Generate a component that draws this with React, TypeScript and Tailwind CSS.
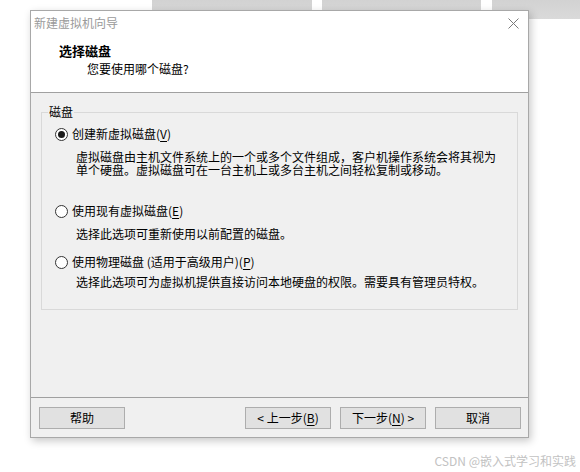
import React from "react";

const font = { fontFamily: '"Noto Sans CJK SC", "Noto Sans", sans-serif' };

function Radio({ checked }: { checked?: boolean }) {
  return (
    <span className="w-[13px] h-[13px] rounded-full border border-[#333333] bg-white flex items-center justify-center shrink-0">
      {checked && <span className="w-[7px] h-[7px] rounded-full bg-[#1a1a1a]" />}
    </span>
  );
}

function Mnemonic({ k }: { k: string }) {
  return (
    <>
      (<span className="underline underline-offset-2">{k}</span>)
    </>
  );
}

function Button({ children }: { children: React.ReactNode }) {
  return (
    <button className="w-[86px] h-[22px] bg-[#e1e1e1] border border-[#adadad] text-[12px] leading-[20px] text-black flex items-center justify-center">
      {children}
    </button>
  );
}

export default function App() {
  return (
    <div className="relative w-[580px] h-[472px] bg-white overflow-hidden text-black" style={font}>
      {/* windows behind */}
      <div className="flex">
        <div className="ml-[152px] w-[160px] h-[19px] bg-gradient-to-b from-[#d2d2d2] to-[#dadada]" />
        <div className="ml-[10px] w-[160px] h-[19px] bg-gradient-to-b from-[#d2d2d2] to-[#dadada]" />
        <div className="ml-[11px] w-[88px] h-[19px] bg-gradient-to-b from-[#d2d2d2] to-[#dadada]" />
      </div>

      {/* wizard dialog */}
      <div className="absolute left-[30px] top-[10px] w-[499px] h-[428px] border border-[#a8a8a8] bg-[#f0f0f0] flex flex-col shadow-[2px_3px_8px_rgba(0,0,0,0.22)]">
        <div className="h-[24px] bg-white flex items-center justify-between pl-[3px] pr-[9px]">
          <span className="text-[12px] text-[#9a9a9a]">新建虚拟机向导</span>
          <svg width="11" height="11" viewBox="0 0 11 11" className="mt-[1px]">
            <path d="M0.5 0.5 L10.5 10.5 M10.5 0.5 L0.5 10.5" stroke="#7a7a7a" strokeWidth="1" />
          </svg>
        </div>

        <div className="h-[58px] bg-white border-b border-[#a0a0a0] pt-[8px] pl-[28px]">
          <div className="text-[13px] leading-[16px] font-bold">选择磁盘</div>
          <div className="text-[12px] leading-[16px] mt-[2px] pl-[28px]">您要使用哪个磁盘?</div>
        </div>

        <div className="h-[305px] border-b border-[#a0a0a0] pt-[19px] pl-[10px] pr-[10px]">
          <div className="relative h-[198px] border border-[#d9d9d9] pt-[13px] pl-[13px] text-[12px]">
            <span className="absolute -top-[9px] left-[6px] px-[1px] bg-[#f0f0f0] leading-[16px]">磁盘</span>

            <div className="flex items-center gap-[4px] h-[16px]">
              <Radio checked />
              <span className="leading-[16px]">
                创建新虚拟磁盘<Mnemonic k="V" />
              </span>
            </div>
            <div className="pl-[21px] mt-[8px] leading-[13px]">
              虚拟磁盘由主机文件系统上的一个或多个文件组成，客户机操作系统会将其视为
              <br />
              单个硬盘。虚拟磁盘可在一台主机上或多台主机之间轻松复制或移动。
            </div>

            <div className="flex items-center gap-[4px] h-[16px] mt-[27px]">
              <Radio />
              <span className="leading-[16px]">
                使用现有虚拟磁盘<Mnemonic k="E" />
              </span>
            </div>
            <div className="pl-[21px] mt-[9px] leading-[12px]">选择此选项可重新使用以前配置的磁盘。</div>

            <div className="flex items-center gap-[4px] h-[16px] mt-[14px]">
              <Radio />
              <span className="leading-[16px]">
                使用物理磁盘 (适用于高级用户)<Mnemonic k="P" />
              </span>
            </div>
            <div className="pl-[21px] mt-[6px] leading-[12px]">
              选择此选项可为虚拟机提供直接访问本地硬盘的权限。需要具有管理员特权。
            </div>
          </div>
        </div>

        <div className="flex-1 flex items-start pt-[9px] pl-[8px] pr-[7px]">
          <Button>帮助</Button>
          <div className="flex-1" />
          <Button>
            &lt; 上一步<Mnemonic k="B" />
          </Button>
          <div className="ml-[9px]">
            <Button>
              下一步<Mnemonic k="N" /> &gt;
            </Button>
          </div>
          <div className="ml-[9px]">
            <Button>取消</Button>
          </div>
        </div>
      </div>

      <div className="absolute right-[4px] top-[453px] text-[12px] leading-[16px] text-[#c2c2c2]">CSDN @嵌入式学习和实践</div>
    </div>
  );
}
